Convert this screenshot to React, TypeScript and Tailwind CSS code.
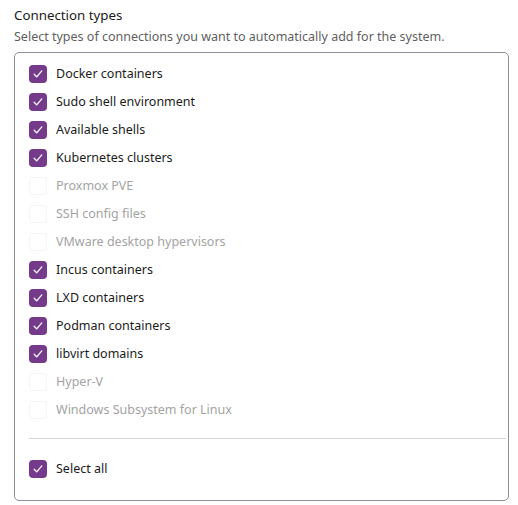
const items = [
  { label: 'Docker containers', on: true },
  { label: 'Sudo shell environment', on: true },
  { label: 'Available shells', on: true },
  { label: 'Kubernetes clusters', on: true },
  { label: 'Proxmox PVE', on: false },
  { label: 'SSH config files', on: false },
  { label: 'VMware desktop hypervisors', on: false },
  { label: 'Incus containers', on: true },
  { label: 'LXD containers', on: true },
  { label: 'Podman containers', on: true },
  { label: 'libvirt domains', on: true },
  { label: 'Hyper-V', on: false },
  { label: 'Windows Subsystem for Linux', on: false },
]

function Check({ on, label }: { on: boolean; label: string }) {
  return (
    <div className="flex items-center h-7 gap-[9px]">
      {on ? (
        <span className="w-[18px] h-[18px] rounded-[4px] bg-[#763a8c] flex items-center justify-center">
          <svg width="12" height="12" viewBox="0 0 12 12" fill="none">
            <path d="M2.2 6.3l2.5 2.6 5.1-6" stroke="white" strokeWidth="1.3" strokeLinecap="round" strokeLinejoin="round" />
          </svg>
        </span>
      ) : (
        <span className="w-[18px] h-[18px] rounded-[4px] border border-[#f5f5f5]" />
      )}
      <span className={on ? 'text-[#1b1b1b]' : 'text-[#a3a3a3]'}>{label}</span>
    </div>
  )
}

export default function App() {
  return (
    <div className="w-[518px] h-[505px] bg-white px-[14px] pt-[5px] text-[12.5px] font-['Segoe_UI','Noto_Sans',sans-serif]">
      <div className="text-[13.3px] text-[#1b1b1b] leading-5">Connection types</div>
      <div className="text-[#5f5f5f] leading-5 mt-[2px]">
        Select types of connections you want to automatically add for the system.
      </div>
      <div className="mt-[5px] w-[495px] h-[449px] border border-[#8b9099] rounded-[5px] pl-[14px] pr-[2px] pt-[7px]">
        {items.map((it) => (
          <Check key={it.label} {...it} />
        ))}
        <div className="mt-[14px] mb-[16px] border-t border-[#d3d3d3]" />
        <Check on={true} label="Select all" />
      </div>
    </div>
  )
}
